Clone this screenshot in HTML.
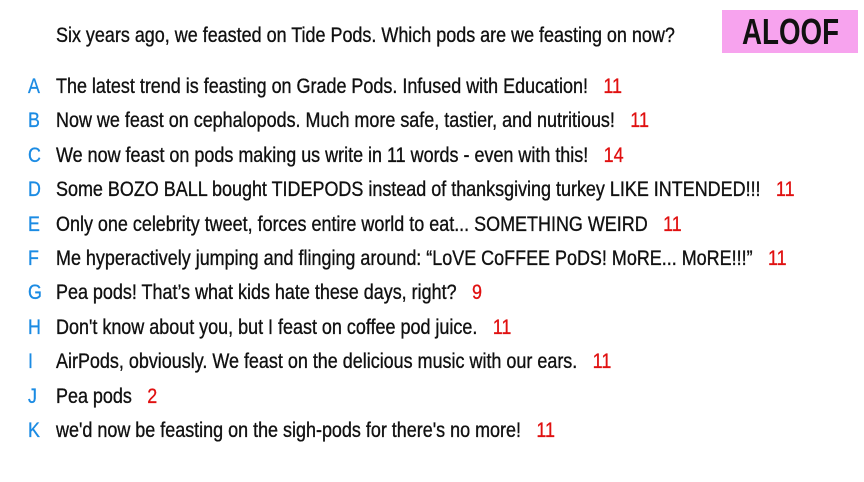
<!DOCTYPE html>
<html><head><meta charset="utf-8"><style>
body{margin:0;width:864px;height:482px;background:#fff;overflow:hidden;position:relative;font-family:"Liberation Sans",sans-serif;color:#111}
.l{position:absolute;left:0;height:24px;font-size:21px;line-height:24px;white-space:nowrap}
.k{position:absolute;left:28px;color:#1b8be3;transform:scaleX(.85);transform-origin:left;-webkit-text-stroke:.3px #1b8be3}
.t{position:absolute;left:56px;transform:scaleX(.855);transform-origin:left;-webkit-text-stroke:.35px #111}
.n{color:#e01010;margin-left:18px;-webkit-text-stroke:.3px #e01010}
.box{position:absolute;left:722px;top:10px;width:136px;height:43px;background:#f7a3ee}
.box span{position:absolute;left:20px;top:4px;font-size:36px;font-weight:bold;line-height:36px;transform:scaleX(.77);transform-origin:left;color:#111}
</style></head><body>
<div class="box"><span>ALOOF</span></div>
<div class="l" style="top:24px"><span class="t">Six years ago, we feasted on Tide Pods. Which pods are we feasting on now?</span></div>
<div class="l" style="top:75px"><span class="k">A</span><span class="t">The latest trend is feasting on Grade Pods. Infused with Education!<span class="n">11</span></span></div>
<div class="l" style="top:109px"><span class="k">B</span><span class="t">Now we feast on cephalopods. Much more safe, tastier, and nutritious!<span class="n">11</span></span></div>
<div class="l" style="top:144px"><span class="k">C</span><span class="t">We now feast on pods making us write in 11 words - even with this!<span class="n">14</span></span></div>
<div class="l" style="top:178px"><span class="k">D</span><span class="t">Some BOZO BALL bought TIDEPODS instead of thanksgiving turkey LIKE INTENDED!!!<span class="n">11</span></span></div>
<div class="l" style="top:213px"><span class="k">E</span><span class="t">Only one celebrity tweet, forces entire world to eat... SOMETHING WEIRD<span class="n">11</span></span></div>
<div class="l" style="top:247px"><span class="k">F</span><span class="t">Me hyperactively jumping and flinging around: “LoVE CoFFEE PoDS! MoRE... MoRE!!!”<span class="n">11</span></span></div>
<div class="l" style="top:281px"><span class="k">G</span><span class="t">Pea pods! That’s what kids hate these days, right?<span class="n">9</span></span></div>
<div class="l" style="top:316px"><span class="k">H</span><span class="t">Don't know about you, but I feast on coffee pod juice.<span class="n">11</span></span></div>
<div class="l" style="top:350px"><span class="k">I</span><span class="t">AirPods, obviously. We feast on the delicious music with our ears.<span class="n">11</span></span></div>
<div class="l" style="top:385px"><span class="k">J</span><span class="t">Pea pods<span class="n">2</span></span></div>
<div class="l" style="top:419px"><span class="k">K</span><span class="t">we'd now be feasting on the sigh-pods for there's no more!<span class="n">11</span></span></div>
</body></html>
